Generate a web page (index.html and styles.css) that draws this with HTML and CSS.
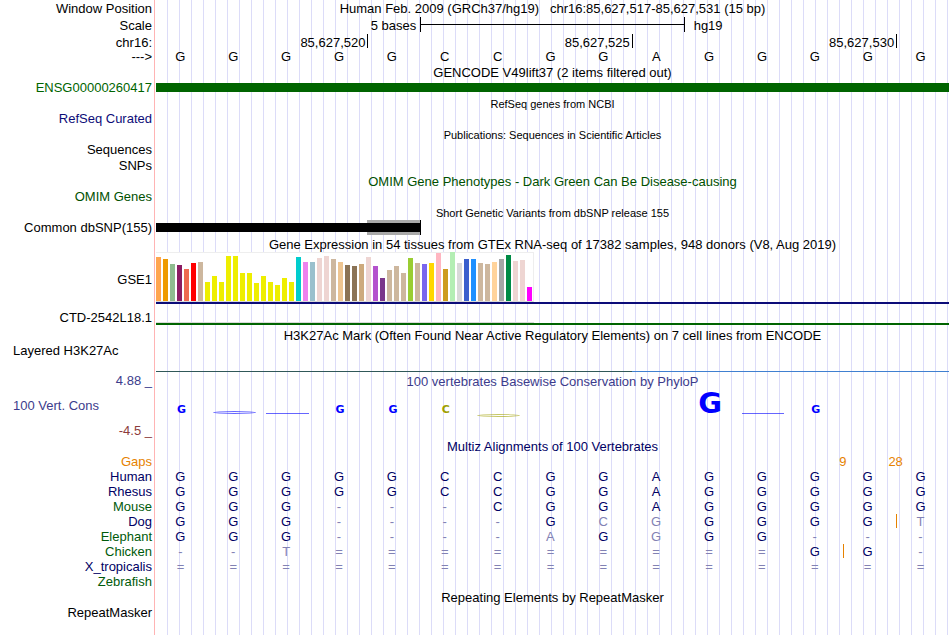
FILE: index.html
```html
<!DOCTYPE html>
<html lang="en">
    <head>
        <meta charset="utf-8">
        <title>Genome Browser</title>
        <meta name="viewport" content="width=device-width, initial-scale=1">
        <link rel="stylesheet" href="styles.css">
    </head>
    <body>
        <div class="browser">

            <!-- ruler -->
            <div class="row position">
                <div class="label">Window Position</div>
                <div class="data title">Human Feb. 2009 (GRCh37/hg19) &nbsp; chr16:85,627,517-85,627,531 (15 bp)</div>
            </div>
            <div class="row scale">
                <div class="label">Scale</div>
                <div class="data cells">
                    <div class="scaleLeft">5 bases</div>
                    <div class="scaleBar"></div>
                    <div class="scaleRight">hg19</div>
                </div>
            </div>
            <div class="row chrom">
                <div class="label">chr16:</div>
                <div class="data cells">
                    <div class="tick first">85,627,520</div>
                    <div class="tick">85,627,525</div>
                    <div class="tick">85,627,530</div>
                </div>
            </div>
            <div class="row">
                <div class="label">---&gt;</div>
                <div class="data cells bases">
                    <span>G</span><span>G</span><span>G</span><span>G</span><span>G</span>
                    <span>C</span><span>C</span><span>G</span><span>G</span><span>A</span>
                    <span>G</span><span>G</span><span>G</span><span>G</span><span>G</span>
                </div>
            </div>

            <!-- genes -->
            <div class="row head">
                <div class="data title">GENCODE V49lift37 (2 items filtered out)</div>
            </div>
            <div class="row">
                <div class="label gene">ENSG00000260417</div>
                <div class="data item"><div class="geneBar"></div></div>
            </div>
            <div class="row head">
                <div class="data title small">RefSeq genes from NCBI</div>
            </div>
            <div class="row">
                <div class="label refseq">RefSeq Curated</div>
            </div>
            <div class="row head">
                <div class="data title small">Publications: Sequences in Scientific Articles</div>
            </div>
            <div class="row">
                <div class="label">Sequences</div>
            </div>
            <div class="row head">
                <div class="label">SNPs</div>
            </div>
            <div class="row head">
                <div class="data title omim">OMIM Gene Phenotypes - Dark Green Can Be Disease-causing</div>
            </div>
            <div class="row">
                <div class="label omim">OMIM Genes</div>
            </div>
            <div class="row head">
                <div class="data title small">Short Genetic Variants from dbSNP release 155</div>
            </div>
            <div class="row">
                <div class="label">Common dbSNP(155)</div>
                <div class="data cells snp">
                    <div class="snpRange"></div>
                    <div class="snpBar"></div>
                </div>
            </div>

            <!-- expression -->
            <div class="row head gtexHead">
                <div class="data title">Gene Expression in 54 tissues from GTEx RNA-seq of 17382 samples, 948 donors (V8, Aug 2019)</div>
            </div>
            <div class="row">
                <div class="label middle">GSE1</div>
                <div class="data gtex">
                    <div class="bars">
                        <i style="height:44px;background:#ffa54f"></i>
                        <i style="height:42px;background:#ee9a00"></i>
                        <i style="height:37px;background:#8fbc8f"></i>
                        <i style="height:36px;background:#8b1c62"></i>
                        <i style="height:32px;background:#ee6a50"></i>
                        <i style="height:38px;background:#ff0000"></i>
                        <i style="height:39px;background:#cdb79e"></i>
                        <i style="height:19px;background:#eeee00"></i>
                        <i style="height:25px;background:#eeee00"></i>
                        <i style="height:19px;background:#eeee00"></i>
                        <i style="height:45px;background:#eeee00"></i>
                        <i style="height:45px;background:#eeee00"></i>
                        <i style="height:28px;background:#eeee00"></i>
                        <i style="height:28px;background:#eeee00"></i>
                        <i style="height:18px;background:#eeee00"></i>
                        <i style="height:25px;background:#eeee00"></i>
                        <i style="height:19px;background:#eeee00"></i>
                        <i style="height:16px;background:#eeee00"></i>
                        <i style="height:23px;background:#eeee00"></i>
                        <i style="height:19px;background:#eeee00"></i>
                        <i style="height:44px;background:#00cdcd"></i>
                        <i style="height:39px;background:#ee82ee"></i>
                        <i style="height:39px;background:#9ac0cd"></i>
                        <i style="height:43px;background:#eed5d2"></i>
                        <i style="height:45px;background:#eed5d2"></i>
                        <i style="height:42px;background:#cdb79e"></i>
                        <i style="height:39px;background:#eec591"></i>
                        <i style="height:36px;background:#8b7355"></i>
                        <i style="height:35px;background:#8b7355"></i>
                        <i style="height:37px;background:#cdaa7d"></i>
                        <i style="height:44px;background:#eed5d2"></i>
                        <i style="height:35px;background:#b452cd"></i>
                        <i style="height:23px;background:#7a378b"></i>
                        <i style="height:31px;background:#cdb79e"></i>
                        <i style="height:35px;background:#cdb79e"></i>
                        <i style="height:28px;background:#cdb79e"></i>
                        <i style="height:43px;background:#9acd32"></i>
                        <i style="height:38px;background:#cdb79e"></i>
                        <i style="height:37px;background:#7a67ee"></i>
                        <i style="height:38px;background:#ffd700"></i>
                        <i style="height:48px;background:#ffb6c1"></i>
                        <i style="height:32px;background:#cd9b1d"></i>
                        <i style="height:49px;background:#b4eeb4"></i>
                        <i style="height:38px;background:#d9d9d9"></i>
                        <i style="height:42px;background:#3a5fcd"></i>
                        <i style="height:42px;background:#1e90ff"></i>
                        <i style="height:38px;background:#cdb79e"></i>
                        <i style="height:37px;background:#cdb79e"></i>
                        <i style="height:39px;background:#ffd39b"></i>
                        <i style="height:42px;background:#a6a6a6"></i>
                        <i style="height:46px;background:#008b45"></i>
                        <i style="height:40px;background:#eed5d2"></i>
                        <i style="height:41px;background:#eed5d2"></i>
                        <i style="height:14px;background:#ff00ff"></i>
                    </div>
                </div>
            </div>
            <div class="row ctd">
                <div class="label">CTD-2542L18.1</div>
                <div class="data lowGene"><div class="lowBars"></div></div>
            </div>

            <!-- regulation -->
            <div class="row head">
                <div class="data title">H3K27Ac Mark (Often Found Near Active Regulatory Elements) on 7 cell lines from ENCODE</div>
            </div>
            <div class="row layered">
                <div class="label leftLabel">Layered H3K27Ac</div>
                <div class="data signal"></div>
            </div>

            <!-- conservation -->
            <div class="row phylop">
                <div class="label phylopAxis">
                    <div>4.88 _</div>
                    <div class="leftLabel">100 Vert. Cons</div>
                    <div class="min">-4.5 _</div>
                </div>
                <div class="data">
                    <div class="title">100 vertebrates Basewise Conservation by PhyloP</div>
                    <div class="cells logo">
                        <span class="s">G</span>
                        <span><i class="flat"></i></span>
                        <span><i class="line"></i></span>
                        <span class="s">G</span>
                        <span class="s">G</span>
                        <span class="s c">C</span>
                        <span class="c below"><i class="flat"></i></span>
                        <span></span>
                        <span></span>
                        <span></span>
                        <span class="l">G</span>
                        <span><i class="line"></i></span>
                        <span class="s">G</span>
                    </div>
                </div>
            </div>

            <!-- alignment -->
            <div class="row head">
                <div class="data title multiz">Multiz Alignments of 100 Vertebrates</div>
            </div>
            <div class="row gaps">
                <div class="label">Gaps</div>
                <div class="data cells">
                    <span class="gap9">9</span>
                    <span class="gap28">28</span>
                </div>
            </div>
            <table class="align">
                <tr><th>Human</th><td>G</td><td>G</td><td>G</td><td>G</td><td>G</td><td>C</td><td>C</td><td>G</td><td>G</td><td>A</td><td>G</td><td>G</td><td>G</td><td>G</td><td>G</td></tr>
                <tr><th>Rhesus</th><td>G</td><td>G</td><td>G</td><td>G</td><td>G</td><td>C</td><td>C</td><td>G</td><td>G</td><td>A</td><td>G</td><td>G</td><td>G</td><td>G</td><td>G</td></tr>
                <tr><th class="alt">Mouse</th><td>G</td><td>G</td><td>G</td><td class="d">-</td><td class="d">-</td><td class="d">-</td><td>C</td><td>G</td><td>G</td><td>A</td><td>G</td><td>G</td><td>G</td><td>G</td><td>G</td></tr>
                <tr><th>Dog</th><td>G</td><td>G</td><td>G</td><td class="d">-</td><td class="d">-</td><td class="d">-</td><td class="d">-</td><td>G</td><td class="d">C</td><td class="d">G</td><td>G</td><td>G</td><td>G</td><td>G</td><td class="d ins">T</td></tr>
                <tr><th class="alt">Elephant</th><td>G</td><td>G</td><td>G</td><td class="d">-</td><td class="d">-</td><td class="d">-</td><td class="d">-</td><td class="d">A</td><td>G</td><td class="d">G</td><td>G</td><td>G</td><td class="d">-</td><td class="d">-</td><td class="d">-</td></tr>
                <tr><th class="alt">Chicken</th><td class="d">-</td><td class="d">-</td><td class="d">T</td><td class="d">=</td><td class="d">=</td><td class="d">=</td><td class="d">=</td><td class="d">=</td><td class="d">=</td><td class="d">=</td><td class="d">=</td><td class="d">=</td><td>G</td><td class="ins">G</td><td class="d">-</td></tr>
                <tr><th>X_tropicalis</th><td class="d">=</td><td class="d">=</td><td class="d">=</td><td class="d">=</td><td class="d">=</td><td class="d">=</td><td class="d">=</td><td class="d">=</td><td class="d">=</td><td class="d">=</td><td class="d">=</td><td class="d">=</td><td class="d">=</td><td class="d">=</td><td class="d">=</td></tr>
                <tr><th class="alt">Zebrafish</th><td colspan="15"></td></tr>
            </table>

            <div class="row head">
                <div class="data title">Repeating Elements by RepeatMasker</div>
            </div>
            <div class="row">
                <div class="label">RepeatMasker</div>
            </div>
        </div>
    </body>
</html>
```
FILE: styles.css
```css
body {
    margin: 0;
    background-color: white;
    color: black;
    font-family: "Liberation Sans", Arial, Helvetica, sans-serif;
    font-size: 13px;
    line-height: 15px;
}
/* red divider and the light guide lines behind all tracks */
.browser {
    box-sizing: border-box;
    min-height: 100vh;
    padding-right: 1px;
    background-image:
        linear-gradient(#ffb4b4, #ffb4b4),
        repeating-linear-gradient(to right, transparent 0, transparent 11px, #dcdcf8 11px, #dcdcf8 12px);
    background-repeat: no-repeat;
    background-position: 154px 0, 156px 0;
    background-size: 1px 100%, 100% 100%;
}
.row {
    display: grid;
    grid-template-columns: 152px 1fr;
    column-gap: 4px;
    min-height: 15px;
}
.label {
    grid-column: 1;
    text-align: right;
    white-space: nowrap;
}
.data {
    grid-column: 2;
    min-width: 0;
}
.title {
    text-align: center;
    white-space: nowrap;
}
.head {
    height: 16px;
    line-height: 18px;
}
.gtexHead {
    height: 17px;
    line-height: 20px;
}
.small {
    font-size: 11px;
}
.middle {
    align-self: center;
    padding-top: 2px;
}
.leftLabel {
    text-align: left;
    padding-left: 13px;
}
.cells {
    display: grid;
    grid-template-columns: repeat(15, 1fr);
}

/* ruler */
.position, .scale {
    min-height: 17px;
    line-height: 17px;
}
.scaleLeft {
    grid-column: 1 / 6;
    text-align: right;
    padding-right: 4px;
}
.scaleBar {
    grid-column: 6 / 11;
    height: 15px;
    border-left: 1px solid black;
    border-right: 1px solid black;
    background: linear-gradient(black, black) 0 7px / 100% 1px no-repeat;
}
.scaleRight {
    grid-column: 11 / 16;
    padding-left: 9px;
}
.chrom {
    height: 15px;
    line-height: 17px;
}
.tick {
    grid-column: span 5;
    height: 14px;
    margin-right: -1px;
    padding-right: 2px;
    border-right: 1px solid black;
    text-align: right;
}
.first {
    grid-column: span 4;
}
.bases span {
    padding-right: 4px;
    text-align: center;
}

/* genes and variants */
.gene {
    color: #006400;
}
.refseq {
    color: #0c0c78;
}
.omim {
    color: #005000;
}
.geneBar {
    height: 9px;
    margin: 3px 0;
    background-color: #006400;
}
.snpRange {
    grid-area: 1 / 5 / 2 / 6;
    height: 15px;
    background-color: #a9a9a9;
    border-right: 1px solid black;
    margin-right: -1px;
}
.snpBar {
    grid-area: 1 / 1 / 2 / 6;
    height: 9px;
    margin: 3px 0;
    background-color: black;
}

/* expression */
.gtex {
    border-bottom: 2px solid #0c0c78;
}
.bars {
    display: flex;
    align-items: flex-end;
    gap: 2px;
    width: 377px;
    height: 48px;
    background-color: white;
    border-top: 1px solid #eeeeee;
    border-right: 1px solid #eeeeee;
    border-bottom: 1px solid #d9d9d9;
}
.bars i {
    width: 5px;
}
.ctd {
    min-height: 23px;
}
.ctd .label {
    padding-top: 6px;
}
.lowGene {
    height: 18px;
    padding-top: 1px;
    border-bottom: 2px solid #006400;
}
.lowBars {
    width: 378px;
    height: 17px;
    border-bottom: 1px solid #d9d9d9;
}

/* regulation */
.layered {
    min-height: 29px;
}
.signal {
    background: linear-gradient(to right, #305858 60%, #4080d0 60%) bottom / 100% 1px no-repeat;
}

/* conservation */
.phylop {
    min-height: 66px;
    color: #3c3c8c;
}
.phylop .title {
    line-height: 19px;
}
.phylopAxis {
    display: flex;
    flex-direction: column;
    justify-content: space-between;
    padding-top: 1px;
}
.min {
    color: #8c3c3c;
}
.logo {
    height: 23px;
    align-items: end;
    color: #0000ff;
    font-family: "DejaVu Sans", sans-serif;
    font-weight: bold;
    text-align: center;
}
.logo span {
    padding: 0 6px 0 4px;
}
.logo .s {
    font-size: 11px;
    line-height: 8px;
}
.logo .l {
    font-size: 29px;
    line-height: 21px;
}
.logo .c {
    color: #a0a000;
}
.flat, .line {
    display: block;
    border-top: 1px solid;
    opacity: 0.6;
}
.flat {
    height: 1px;
    border: 1px solid;
    border-radius: 50%;
}
.below {
    margin-bottom: -3px;
}

/* alignment */
.multiz {
    color: #000064;
}
.gaps {
    color: #e68200;
}
.gaps span {
    grid-row: 1;
    padding-right: 1px;
    text-align: center;
}
.gap9 {
    grid-column: 13 / 15;
}
.gap28 {
    grid-column: 14 / 16;
}
.align {
    width: 100%;
    table-layout: fixed;
    border-collapse: separate;
    border-spacing: 0;
    color: #000064;
}
.align th {
    width: 152px;
    padding: 0 4px 0 0;
    font-weight: normal;
    text-align: right;
}
.align td {
    padding: 0 4px 0 0;
    text-align: center;
}
.align .alt {
    color: #005a0a;
}
.align .d {
    color: #8282b4;
}
/* insertion mark on the boundary before the base */
.align .ins {
    background: linear-gradient(#e68200, #e68200) left top / 1px 14px no-repeat;
}
```
